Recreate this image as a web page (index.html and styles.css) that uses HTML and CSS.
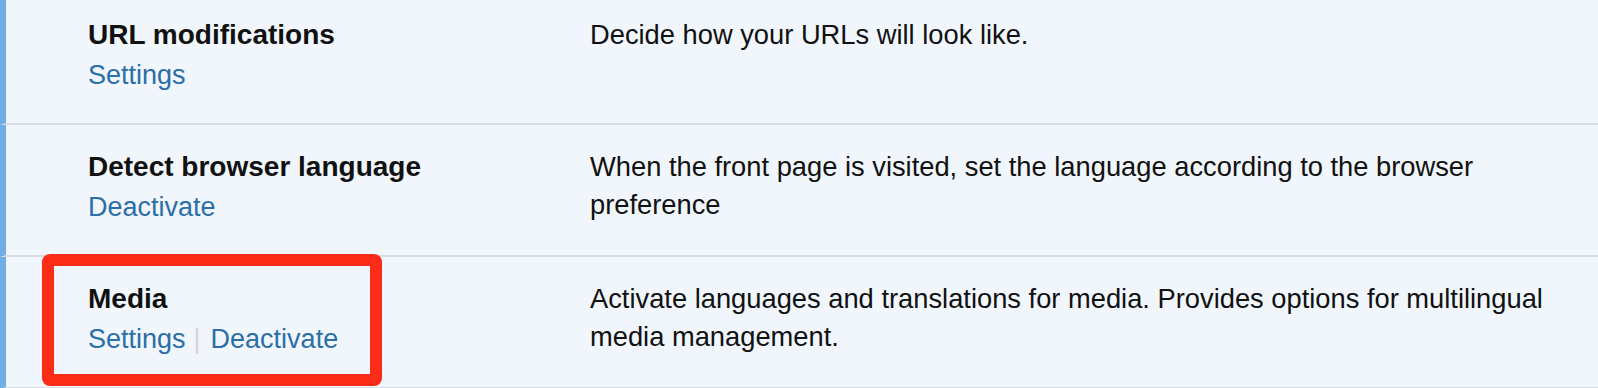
FILE: index.html
```html
<!DOCTYPE html>
<html lang="en">
<head>
    <meta charset="UTF-8">
    <title>Modules</title>
    <link rel="stylesheet" href="styles.css">
</head>
<body>
    <div class="modules">
        <div class="module-row">
            <div class="module-title">
                <strong>URL modifications</strong>
                <div class="row-actions"><a href="#">Settings</a></div>
            </div>
            <div class="module-desc">Decide how your URLs will look like.</div>
        </div>

        <div class="module-row">
            <div class="module-title">
                <strong>Detect browser language</strong>
                <div class="row-actions"><a href="#">Deactivate</a></div>
            </div>
            <div class="module-desc">When the front page is visited, set the language according to the browser preference</div>
        </div>

        <div class="module-row">
            <div class="highlight"></div>
            <div class="module-title">
                <strong>Media</strong>
                <div class="row-actions"><a href="#">Settings</a><span class="sep">|</span><a href="#">Deactivate</a></div>
            </div>
            <div class="module-desc">Activate languages and translations for media. Provides options for multilingual media management.</div>
        </div>
    </div>
</body>
</html>
```

FILE: styles.css
```css
body {
    margin: 0;
    background-color: #f0f6fc;
    font-family: "Liberation Sans", Arial, sans-serif;
    font-size: 27px;
    line-height: 37px;
    color: #1d2327;
    overflow: hidden;
}

.modules {
    margin-top: -7px;
}

/* ligne de module active */
.module-row {
    position: relative;
    display: grid;
    grid-template-columns: 502px 1fr;
    border-left: 6px solid #72aee6;
    border-bottom: 2px solid #d6dce2;
    padding: 23px 28px 29px 82px;
}

.module-title strong {
    display: block;
    font-size: 28px;
    color: #111;
}

.row-actions {
    margin-top: 4px;
}

.row-actions a {
    color: #2c6ea6;
    text-decoration: none;
}

.row-actions .sep {
    color: #d3d6da;
    margin: 0 10px 0 8px;
}

.module-desc {
    font-size: 27.3px;
    line-height: 38px;
    color: #111;
}

/* cadre rouge */
.highlight {
    position: absolute;
    left: 36px;
    top: -3px;
    width: 340px;
    height: 132px;
    box-sizing: border-box;
    border: 12px solid #fb2c17;
    border-radius: 8px;
}
```
